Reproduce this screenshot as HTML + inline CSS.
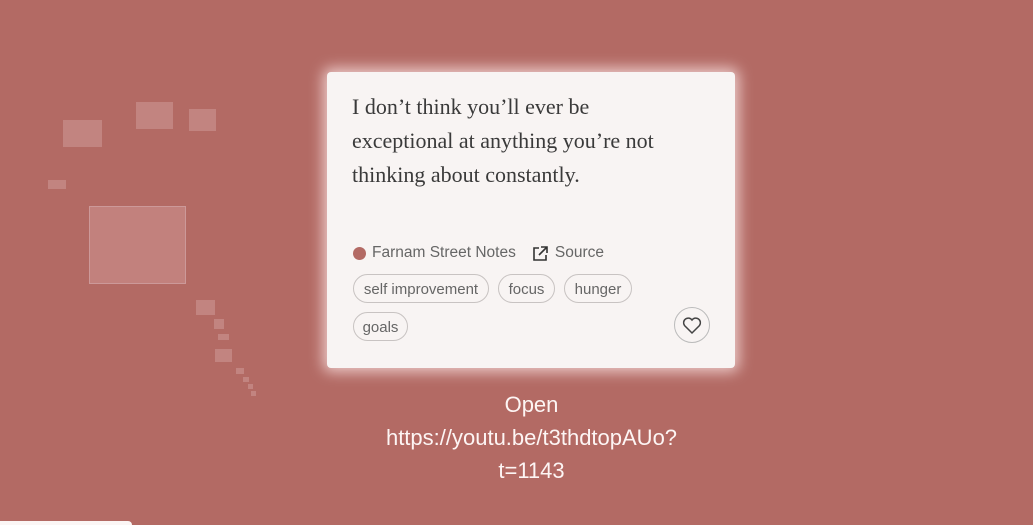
<!DOCTYPE html>
<html><head><meta charset="utf-8"><style>
html,body{margin:0;padding:0;width:1033px;height:525px;overflow:hidden;}
body{background:#b36a64;position:relative;font-family:"Liberation Sans",sans-serif;}
.m{position:absolute;background:#c28480;}
.card{position:absolute;left:327px;top:72px;width:408px;height:296px;background:#f8f4f3;border-radius:4px;box-shadow:0 0 14px 4px rgba(255,235,235,0.75);}
.q{position:absolute;left:25px;top:18px;width:380px;white-space:nowrap;font-family:"Liberation Serif",serif;font-size:22px;line-height:34px;color:#3a3a3a;}
.meta{position:absolute;left:26px;top:172px;font-size:15.5px;color:#666;display:flex;align-items:center;}
.dot{width:13px;height:13px;border-radius:50%;background:#b36a64;margin-right:6px;}
.tag{position:absolute;height:27px;border:1.5px solid #c8c3c2;border-radius:15px;font-size:15px;color:#666;line-height:29px;text-align:center;box-sizing:content-box;}
.heart{position:absolute;left:347px;top:235px;width:34px;height:34px;border:1.5px solid #bbb;border-radius:50%;}
.open{position:absolute;left:300px;width:463px;top:388px;text-align:center;color:#fdf5f4;font-size:22px;line-height:33px;}
</style></head><body>
<div class="m" style="left:63px;top:120px;width:39px;height:27px"></div>
<div class="m" style="left:136px;top:102px;width:37px;height:27px"></div>
<div class="m" style="left:189px;top:109px;width:27px;height:22px"></div>
<div class="m" style="left:48px;top:180px;width:18px;height:9px"></div>
<div class="m" style="left:89px;top:206px;width:95px;height:76px;background:#c2817d;border:1px solid #c99"></div>
<div class="m" style="left:196px;top:300px;width:19px;height:15px"></div>
<div class="m" style="left:214px;top:319px;width:10px;height:10px"></div>
<div class="m" style="left:218px;top:334px;width:11px;height:6px"></div>
<div class="m" style="left:215px;top:349px;width:17px;height:13px"></div>
<div class="m" style="left:236px;top:368px;width:8px;height:6px"></div>
<div class="m" style="left:243px;top:377px;width:6px;height:5px"></div>
<div class="m" style="left:248px;top:384px;width:5px;height:5px"></div>
<div class="m" style="left:251px;top:391px;width:5px;height:5px"></div>
<div style="position:absolute;left:-10px;top:521px;width:142px;height:4px;background:#fbf6f5;border-radius:0 20px 0 0"></div>
<div class="card">
<div class="q">I don’t think you’ll ever be<br>exceptional at anything you’re not<br>thinking about constantly.</div>
<div class="meta"><span class="dot"></span>Farnam Street Notes
<svg style="margin-left:16px;margin-right:6px" width="17" height="17" viewBox="0 0 17 17" fill="none" stroke="#333" stroke-width="1.6"><path d="M7 3H2v12h12v-5"/><path d="M9 2h6v6M15 2L7 10"/></svg>Source</div>
<div class="tag" style="left:26px;top:202px;width:134px">self improvement</div>
<div class="tag" style="left:171px;top:202px;width:55px">focus</div>
<div class="tag" style="left:237px;top:202px;width:66px">hunger</div>
<div class="tag" style="left:26px;top:240px;width:53px">goals</div>
<div class="heart"><svg width="34" height="34" viewBox="0 0 34 34" fill="none" stroke="#444" stroke-width="1.5"><path d="M17 25l-7.5-7.5a4.3 4.3 0 0 1 7.5-5.5a4.3 4.3 0 0 1 7.5 5.5z"/></svg></div>
</div>
<div class="open">Open<br>https://youtu.be/t3thdtopAUo?<br>t=1143</div>
</body></html>
